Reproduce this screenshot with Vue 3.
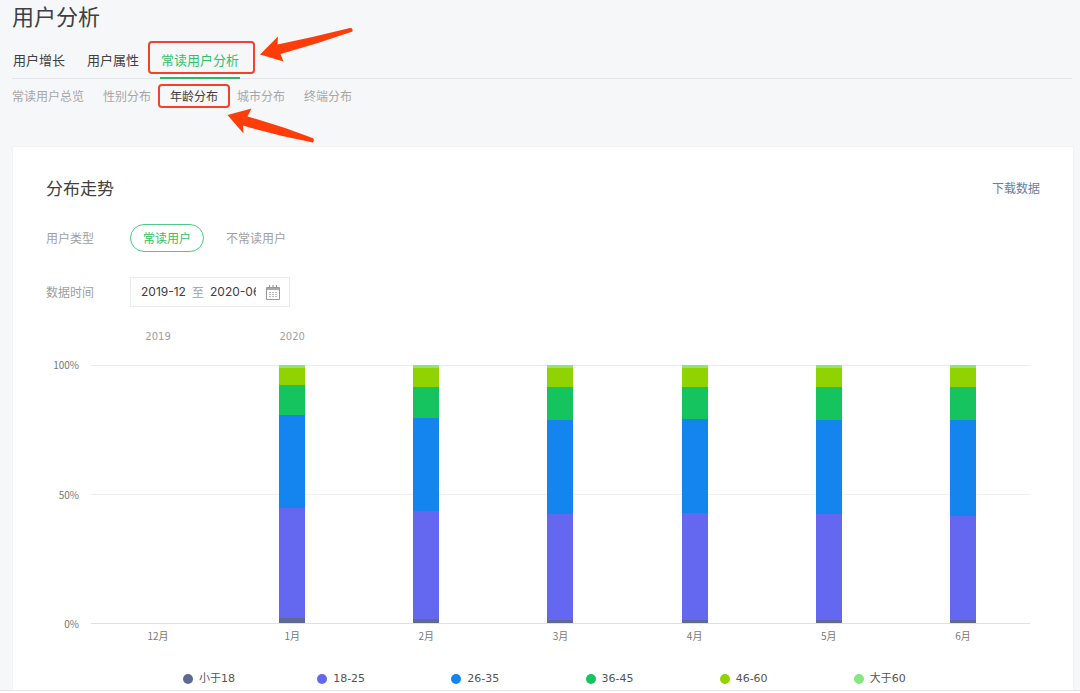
<script setup>
const tabs = ['用户增长', '用户属性', '常读用户分析']
const subTabs = ['常读用户总览', '性别分布', '年龄分布', '城市分布', '终端分布']
const groups = [
  { name: '小于18', color: '#5f6a93' },
  { name: '18-25', color: '#6467ef' },
  { name: '26-35', color: '#1485ee' },
  { name: '36-45', color: '#15c35f' },
  { name: '46-60', color: '#91d300' },
  { name: '大于60', color: '#86e67f' },
]
// shares follow the order of groups, in percent
const months = [
  { label: '12月', year: '2019', shares: [] },
  { label: '1月', year: '2020', shares: [2, 42.6, 36, 11.6, 6.6, 1.2] },
  { label: '2月', shares: [1.6, 41.8, 36.2, 12, 7.2, 1.2] },
  { label: '3月', shares: [1.2, 41.2, 36.4, 12.8, 7.2, 1.2] },
  { label: '4月', shares: [1.2, 41.6, 36.4, 12.4, 7.2, 1.2] },
  { label: '5月', shares: [1.2, 41, 36.6, 12.8, 7.2, 1.2] },
  { label: '6月', shares: [1.2, 40.4, 37.2, 12.8, 7.2, 1.2] },
]
</script>

<template>
  <div class="page">
    <header class="head">
      <h1>用户分析</h1>
      <nav class="tabs">
        <a v-for="(t, i) in tabs" :key="t" href="#" :class="{ on: i === 2 }">
          {{ t }}<span v-if="i === 2" class="mark"></span>
        </a>
      </nav>
      <nav class="subtabs">
        <a v-for="(t, i) in subTabs" :key="t" href="#" :class="{ on: i === 2 }">
          {{ t }}<span v-if="i === 2" class="mark"></span>
        </a>
      </nav>
      <svg class="arrow first" width="94" height="36" viewBox="260 27 94 36" aria-hidden="true">
        <path fill="#ff3d0a" d="M260 54.500 278 36.500 277.500 44.500Q314 37 350 28Q353 27.500 352.500 31.500Q317 44 280.500 54L283.500 61.500Z" />
      </svg>
      <svg class="arrow second" width="88" height="36" viewBox="227 108 88 36" aria-hidden="true">
        <path fill="#ff3d0a" d="M227.500 115 251.500 108.500 247.500 116.500Q281 126 312.500 138Q315 139.500 313 142.500Q278 136 243 125.500L243.500 133.500Z" />
      </svg>
    </header>

    <main class="card">
      <div class="card-head">
        <h2>分布走势</h2>
        <a href="#">下载数据</a>
      </div>

      <div class="row types">
        <span class="label">用户类型</span>
        <button type="button" class="pill on">常读用户</button>
        <button type="button" class="pill">不常读用户</button>
      </div>

      <div class="row">
        <label class="label" for="from">数据时间</label>
        <div class="range">
          <input id="from" type="text" value="2019-12" />
          <span>至</span>
          <input type="text" value="2020-06" aria-label="结束月份" />
          <svg width="14" height="15" viewBox="0 0 14 15" fill="none" stroke="#999" aria-hidden="true">
            <path d="M.5 2.500h13v12H.5z" />
            <path d="M1 3.500h12M1 4.500h12" stroke="#aaa" />
            <path d="M3.500 0v3M7 0v3M10.500 0v3" />
            <path d="M3 7.500h8M3 9.500h8M3 11.500h8" stroke="#bbb" stroke-dasharray="2 1" />
          </svg>
        </div>
      </div>

      <section class="chart">
        <div class="years">
          <span v-for="m in months" :key="m.label">{{ m.year }}</span>
        </div>
        <div class="plot">
          <div class="scale"><span>100%</span><span>50%</span><span>0%</span></div>
          <div v-for="m in months" :key="m.label" class="col">
            <div class="bar">
              <i
                v-for="(s, i) in m.shares"
                :key="i"
                :style="{ height: s + '%', background: groups[i].color }"
              ></i>
            </div>
          </div>
        </div>
        <div class="months">
          <span v-for="m in months" :key="m.label">{{ m.label }}</span>
        </div>
        <ul class="legend">
          <li v-for="g in groups" :key="g.name">
            <i :style="{ background: g.color }"></i>{{ g.name }}
          </li>
        </ul>
      </section>
    </main>
  </div>
</template>

<style>
body {
  background: #fff;
}
</style>

<style scoped>
.page {
  background: #f6f7f9;
  border-bottom: 1px solid #e1e3e8;
  font: 12px/18px "Noto Sans CJK SC", sans-serif;
  color: #a0a0a0;
  overflow: hidden;
}
.page * {
  box-sizing: border-box;
}
a {
  color: inherit;
  text-decoration: none;
}
.head {
  position: relative;
  padding: 0 8px 0 12px;
  height: 146px;
}
h1 {
  margin: 0;
  font-size: 22px;
  line-height: 30px;
  font-weight: 400;
  color: #404040;
}
.tabs {
  display: flex;
  gap: 20px;
  margin-top: 12px;
  border-bottom: 1px solid #e4e6ea;
}
.tabs a {
  position: relative;
  padding: 0 1px;
  margin-bottom: -1px;
  font-size: 13px;
  line-height: 35px;
  color: #404040;
  border-bottom: 2px solid transparent;
  white-space: nowrap;
}
.tabs .on {
  color: #2fc26b;
  border-color: #2fb56a;
}
.mark {
  position: absolute;
  border: 2px solid #f5412b;
  border-radius: 4px;
}
.tabs .mark {
  inset: -1px -15px 3px -12px;
}
.subtabs {
  display: flex;
  gap: 19px;
  margin-top: 8px;
  line-height: 18px;
  color: #a6a6a6;
}
.subtabs a {
  position: relative;
  white-space: nowrap;
}
.subtabs .on {
  color: #404040;
}
.subtabs .mark {
  inset: -3px -12px;
}
.arrow {
  position: absolute;
}
.first {
  left: 260px;
  top: 27px;
}
.second {
  left: 227px;
  top: 108px;
}
.card {
  margin: 0 6px 0 12px;
  padding: 29px 33px 2px;
  background: #fff;
  border: 1px solid #f1f2f4;
  border-bottom: 0;
}
.card-head {
  display: flex;
  justify-content: space-between;
  align-items: center;
  color: #6b7ca1;
}
h2 {
  margin: 0;
  font-size: 17px;
  line-height: 24px;
  font-weight: 400;
  color: #404040;
}
.row {
  display: flex;
  align-items: center;
  height: 30px;
}
.types {
  margin: 23px 0 24px;
}
.label {
  width: 84px;
}
.pill {
  height: 28px;
  padding: 0 12px;
  border: 1px solid transparent;
  border-radius: 14px;
  background: none;
  font: inherit;
  color: inherit;
}
.pill.on {
  margin-right: 9px;
  border-color: #4fc985;
  color: #2fc26b;
}
.range {
  display: flex;
  align-items: center;
  width: 160px;
  height: 30px;
  padding: 0 8px 0 10px;
  border: 1px solid #ebebee;
}
.range input {
  width: 46px;
  padding: 0;
  border: 0;
  background: none;
  font: 12px/18px Inter, sans-serif;
  color: #404040;
}
.range span {
  margin: 0 6px 0 5px;
}
.range svg {
  margin-left: 10px;
}
.chart {
  margin-top: 20px;
  padding: 0 10px 0 45px;
  font-size: 10px;
  line-height: 16px;
}
.years,
.months,
.plot {
  display: grid;
  grid-template-columns: repeat(7, 1fr);
  text-align: center;
}
.years {
  height: 38px;
  padding-top: 2px;
  font-family: "DejaVu Sans", sans-serif;
}
.plot {
  position: relative;
  height: 259px;
  border-bottom: 1px solid #dddff0;
  background: linear-gradient(#ececee, #ececee) 0 0 / 100% 1px no-repeat,
    linear-gradient(#f0f0f2, #f0f0f2) 0 50% / 100% 1px no-repeat;
}
.scale {
  position: absolute;
  right: 100%;
  top: -8px;
  bottom: -9px;
  padding-right: 12px;
  display: flex;
  flex-direction: column;
  justify-content: space-between;
  text-align: right;
  color: #777;
}
.col {
  display: flex;
  justify-content: center;
}
.bar {
  width: 26px;
  display: flex;
  flex-direction: column-reverse;
}
.months {
  margin-top: 4px;
  color: #777;
}
.legend {
  display: grid;
  grid-template-columns: repeat(6, 1fr);
  margin: 26px 0 0;
  padding: 0 42px 0 92px;
  list-style: none;
  font: 11px/18px "DejaVu Sans", "Noto Sans CJK SC", sans-serif;
  color: #555;
}
.legend li {
  display: flex;
  align-items: center;
  gap: 6px;
}
.legend i {
  width: 10px;
  height: 10px;
  border-radius: 50%;
}
</style>
